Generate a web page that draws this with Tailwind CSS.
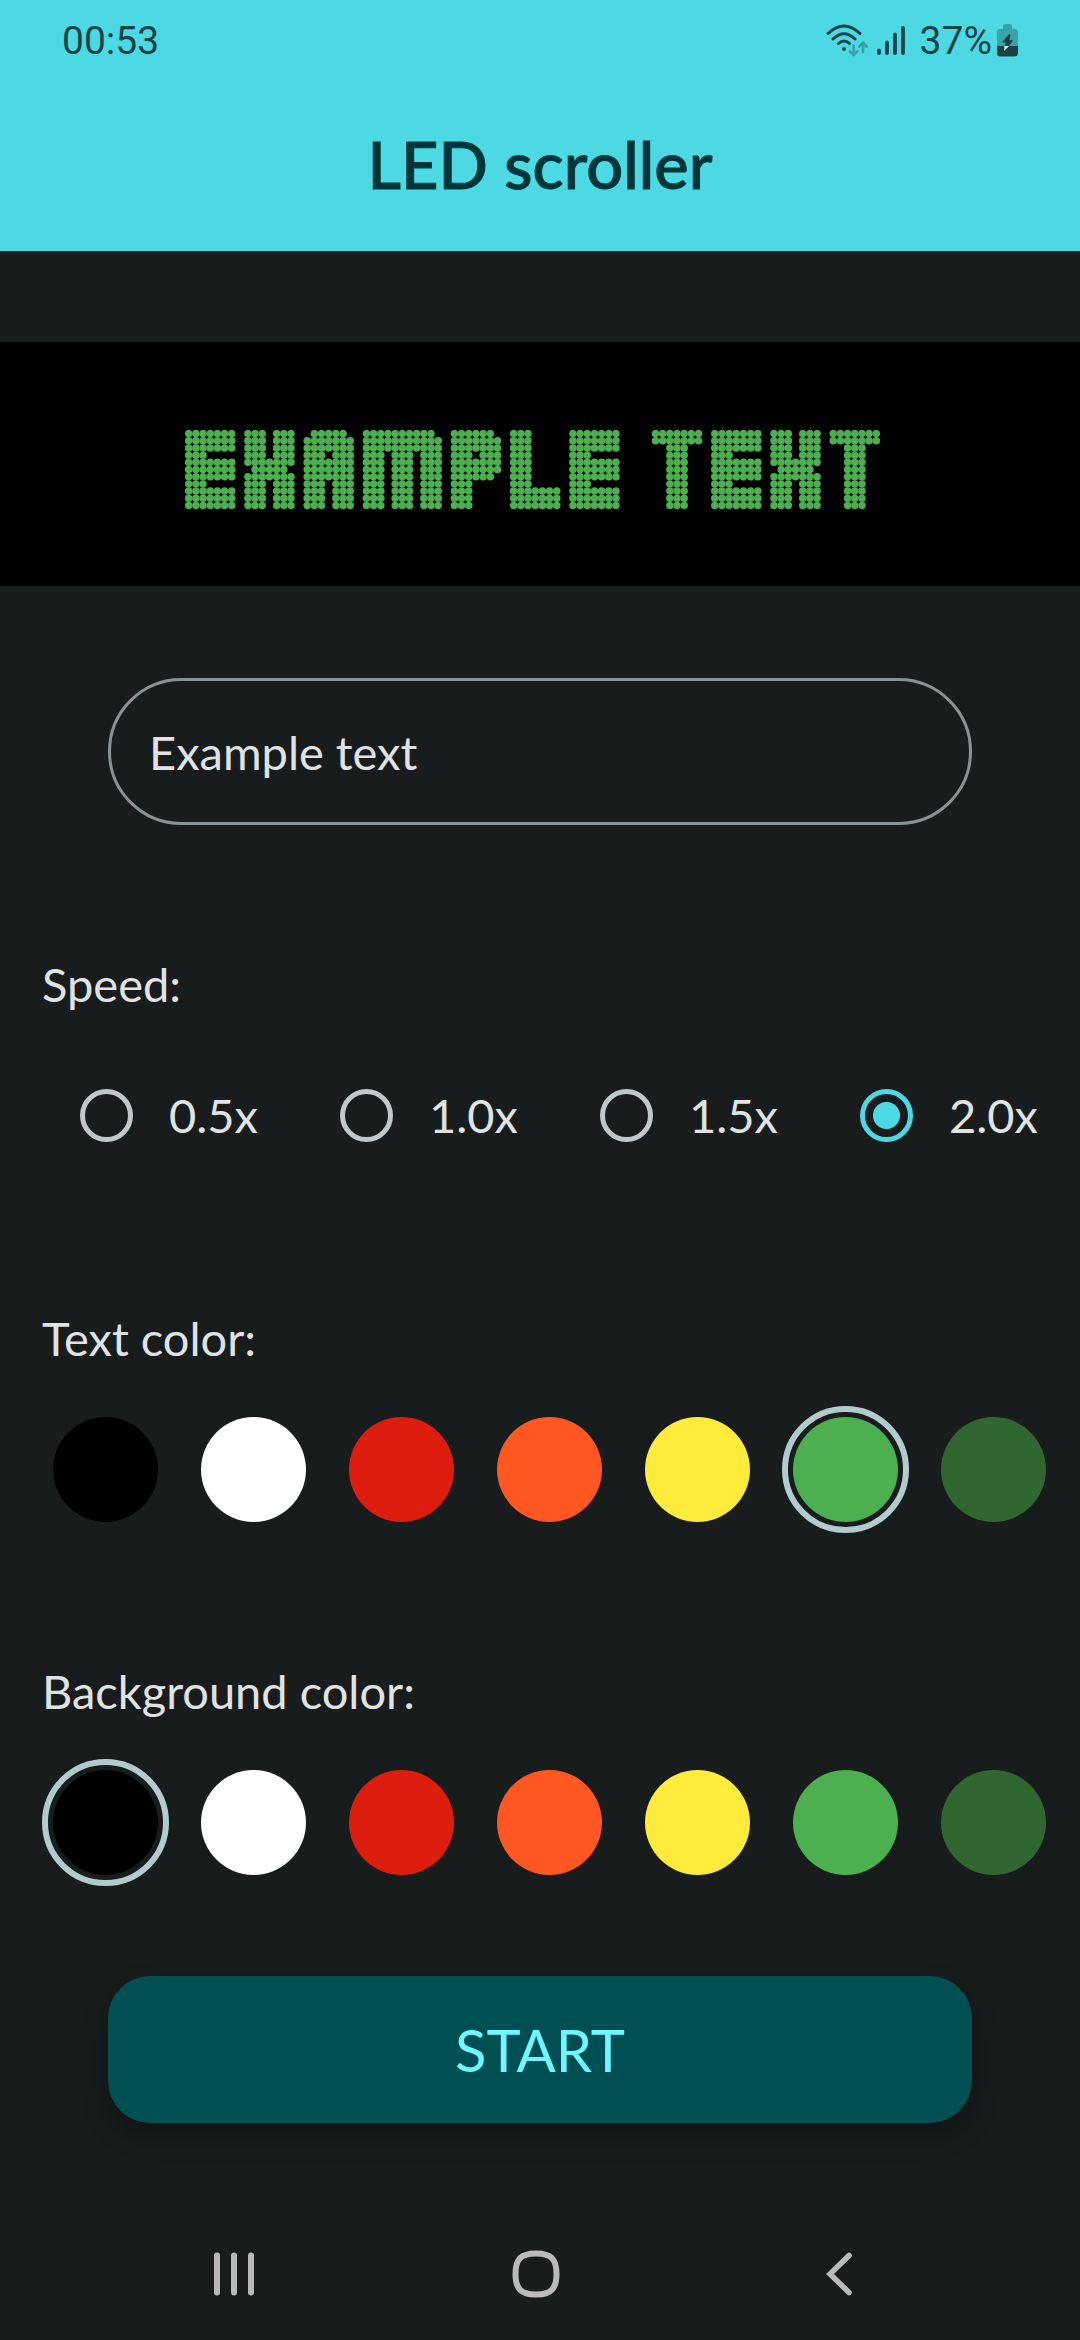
<!DOCTYPE html>
<html lang="en">
<head>
<meta charset="utf-8">
<meta name="viewport" content="width=device-width, initial-scale=1">
<title>LED scroller</title>
<script src="https://cdn.jsdelivr.net/npm/@tailwindcss/browser@4"></script>
</head>
<body class="flex min-h-screen flex-col overflow-x-hidden bg-[#191c1d] font-['Lato',sans-serif] text-[47px] leading-[60px] text-[#e0e3e3]">

<header class="bg-[#4dd9e3] pb-[47px]">
  <div class="flex h-[82px] items-center justify-between px-[62px] font-['Roboto',sans-serif] text-[39px] leading-none text-[#1a4347]">
    <time>00:53</time>
    <div class="flex items-center">
      <svg class="h-[36px] w-[42px]" viewBox="824 24 42 36" fill="none" stroke="currentColor" stroke-width="3" stroke-linecap="round" aria-label="Wi-Fi" role="img">
        <path d="M826 34.500Q842 19.500 858 34.500M831 40Q842 29.500 853 40M836.500 44.500Q842 39.500 847.500 44.500"/>
        <circle cx="842" cy="50" r="2" fill="currentColor" stroke="none"/>
        <g class="text-[#389ea6]"><path d="M851.500 46.500V55.500M847.800 52.300L851.500 56L855.200 52.300M861 53V44.500M857.300 47.500L861 43.800L864.700 47.500" stroke="currentColor" stroke-width="2.600"/></g>
      </svg>
      <svg class="ml-[8px] h-[36px] w-[30px]" viewBox="874 24 30 36" stroke="currentColor" stroke-width="3.800" stroke-linecap="round" aria-label="Signal" role="img">
        <path d="M877 51.500V54M885 43.500V54M893 35.500V54M901 29V54"/>
      </svg>
      <span class="ml-[14px]">37%</span>
      <svg class="ml-[4px] h-[36px] w-[22px]" viewBox="995 24 22 36" aria-label="Charging" role="img">
        <path d="M1002 27Q1002 25 1004 25H1009Q1011 25 1011 27V30H1014Q1017 30 1017 33V47H996V33Q996 30 999 30H1002Z" fill="#3aa3aa"/>
        <path d="M996 47H1017V54Q1017 57.500 1013.500 57.500H999.500Q996 57.500 996 54Z" fill="#1a4347"/>
        <path d="M1008 35L1001 43.500H1005L1003.500 47H1008L1012 41H1008.500L1009.500 36Z" fill="#1a4347"/>
        <path d="M1003.500 47H1008L1003 52Z" fill="#dffcff"/>
      </svg>
    </div>
  </div>
  <h1 class="mt-[42px] text-center text-[65px] leading-[80px] font-medium text-[#00363a] [-webkit-text-stroke:1px_#00363a]">LED scroller</h1>
</header>

<main class="flex flex-col">
  <div class="mt-[91px] flex h-[244px] items-center justify-center bg-black pt-[10px] pr-[16px]">
    <svg id="display" class="h-[79px] w-[697px] fill-[#4caf50]" role="img"></svg>
  </div>

  <input id="message" type="text" value="Example text" aria-label="Text to scroll" class="mx-auto mt-[92px] h-[147px] w-4/5 rounded-full border-3 border-[#899294] bg-transparent px-[38px] outline-none">

  <fieldset class="mt-[129px] px-[42px]">
    <legend>Speed:</legend>
    <div class="mt-[71px] ml-[38px] flex justify-between">
      <label class="flex items-center gap-[36px]"><input type="radio" name="speed" class="size-[53px] appearance-none rounded-full border-5 border-[#bfc8ca] checked:border-[#4dd9e3] checked:bg-[radial-gradient(circle,#4dd9e3_13px,transparent_14px)]">0.5x</label>
      <label class="flex items-center gap-[36px]"><input type="radio" name="speed" class="size-[53px] appearance-none rounded-full border-5 border-[#bfc8ca] checked:border-[#4dd9e3] checked:bg-[radial-gradient(circle,#4dd9e3_13px,transparent_14px)]">1.0x</label>
      <label class="flex items-center gap-[36px]"><input type="radio" name="speed" class="size-[53px] appearance-none rounded-full border-5 border-[#bfc8ca] checked:border-[#4dd9e3] checked:bg-[radial-gradient(circle,#4dd9e3_13px,transparent_14px)]">1.5x</label>
      <label class="flex items-center gap-[36px]"><input type="radio" name="speed" checked class="size-[53px] appearance-none rounded-full border-5 border-[#bfc8ca] checked:border-[#4dd9e3] checked:bg-[radial-gradient(circle,#4dd9e3_13px,transparent_14px)]">2.0x</label>
    </div>
  </fieldset>

  <fieldset class="mt-[163px] px-[42px]">
    <legend>Text color:</legend>
    <div class="mt-[49px] ml-[11px] flex gap-[43px]">
      <input type="radio" name="text-color" aria-label="Black" class="size-[105px] shrink-0 appearance-none rounded-full bg-black outline-offset-5 outline-[#b1cbce] checked:outline-6">
      <input type="radio" name="text-color" aria-label="White" class="size-[105px] shrink-0 appearance-none rounded-full bg-white outline-offset-5 outline-[#b1cbce] checked:outline-6">
      <input type="radio" name="text-color" aria-label="Red" class="size-[105px] shrink-0 appearance-none rounded-full bg-[#dd1e0f] outline-offset-5 outline-[#b1cbce] checked:outline-6">
      <input type="radio" name="text-color" aria-label="Orange" class="size-[105px] shrink-0 appearance-none rounded-full bg-[#ff5722] outline-offset-5 outline-[#b1cbce] checked:outline-6">
      <input type="radio" name="text-color" aria-label="Yellow" class="size-[105px] shrink-0 appearance-none rounded-full bg-[#ffeb3b] outline-offset-5 outline-[#b1cbce] checked:outline-6">
      <input type="radio" name="text-color" aria-label="Green" checked class="size-[105px] shrink-0 appearance-none rounded-full bg-[#4caf50] outline-offset-5 outline-[#b1cbce] checked:outline-6">
      <input type="radio" name="text-color" aria-label="Dark green" class="size-[105px] shrink-0 appearance-none rounded-full bg-[#306731] outline-offset-5 outline-[#b1cbce] checked:outline-6">
    </div>
  </fieldset>

  <fieldset class="mt-[139px] px-[42px]">
    <legend>Background color:</legend>
    <div class="mt-[49px] ml-[11px] flex gap-[43px]">
      <input type="radio" name="background-color" aria-label="Black" checked class="size-[105px] shrink-0 appearance-none rounded-full bg-black outline-offset-5 outline-[#b1cbce] checked:outline-6">
      <input type="radio" name="background-color" aria-label="White" class="size-[105px] shrink-0 appearance-none rounded-full bg-white outline-offset-5 outline-[#b1cbce] checked:outline-6">
      <input type="radio" name="background-color" aria-label="Red" class="size-[105px] shrink-0 appearance-none rounded-full bg-[#dd1e0f] outline-offset-5 outline-[#b1cbce] checked:outline-6">
      <input type="radio" name="background-color" aria-label="Orange" class="size-[105px] shrink-0 appearance-none rounded-full bg-[#ff5722] outline-offset-5 outline-[#b1cbce] checked:outline-6">
      <input type="radio" name="background-color" aria-label="Yellow" class="size-[105px] shrink-0 appearance-none rounded-full bg-[#ffeb3b] outline-offset-5 outline-[#b1cbce] checked:outline-6">
      <input type="radio" name="background-color" aria-label="Green" class="size-[105px] shrink-0 appearance-none rounded-full bg-[#4caf50] outline-offset-5 outline-[#b1cbce] checked:outline-6">
      <input type="radio" name="background-color" aria-label="Dark green" class="size-[105px] shrink-0 appearance-none rounded-full bg-[#306731] outline-offset-5 outline-[#b1cbce] checked:outline-6">
    </div>
  </fieldset>

  <button type="button" class="mx-auto mt-[101px] h-[147px] w-4/5 rounded-[42px] bg-[#004f53] text-[58px] text-[#6ff6ff] shadow-[0_12px_24px_rgba(0,0,0,0.35)]">START</button>
</main>

<nav class="mt-auto flex h-[132px] items-center justify-around pr-[90px] pl-[83px] text-[#bababa]">
  <button type="button" aria-label="Recent apps" class="flex size-[64px] items-center justify-center"><svg class="h-[44px] w-[42px]" viewBox="0 0 42 44" stroke="currentColor" stroke-width="6" stroke-linecap="round"><path d="M4 3.500V40.500M21 3.500V40.500M38 3.500V40.500"/></svg></button>
  <button type="button" aria-label="Home" class="flex size-[64px] items-center justify-center"><svg class="size-[48px]" viewBox="0 0 48 48" fill="none" stroke="currentColor" stroke-width="6"><path d="M24 3.500C39 3.500 44.500 9 44.500 24S39 44.500 24 44.500S3.500 39 3.500 24S9 3.500 24 3.500Z"/></svg></button>
  <button type="button" aria-label="Back" class="flex size-[64px] items-center justify-center"><svg class="h-[44px] w-[28px]" viewBox="0 0 28 44" fill="none" stroke="currentColor" stroke-width="5.500" stroke-linecap="round"><path d="M24 3.500L5 22L24 40.500"/></svg></button>
</nav>

<script>
// Lamp patterns of the dot-matrix alphabet, eleven rows per character.
const full = '1111111', legs = '1110111', stem = '1110000';
const rows = (...parts) => parts.flatMap(([row, count]) => Array(count).fill(row));
const alphabet = {
  E: rows([full, 3], [stem, 1], [full, 3], [stem, 1], [full, 3]),
  X: rows([legs, 4], [full, 1], ['0111110', 1], [full, 1], [legs, 4]),
  A: rows(['0111110', 1], [full, 2], [legs, 1], [full, 3], [legs, 4]),
  M: rows(['11111111110', 1], ['11111111111', 2], ['11101110111', 8]),
  P: rows(['1111110', 1], [full, 2], [legs, 1], [full, 2], ['1111110', 1], [stem, 4]),
  L: rows([stem, 8], [full, 3]),
  T: rows([full, 2], ['0011100', 9]),
  ' ': rows(['00', 11])
};
const display = document.getElementById('display');
const message = document.getElementById('message').value.toUpperCase();
let x = 0, lamps = '';
for (const character of message) {
  const pattern = alphabet[character];
  pattern.forEach((row, y) => [...row].forEach((on, i) => {
    if (on === '1') lamps += `<circle cx="${x + i + 0.5}" cy="${y + 0.5}" r="0.52"/>`;
  }));
  x += pattern[0].length + 1.25;
}
display.setAttribute('viewBox', `0 0 ${x - 1.25} 11`);
display.setAttribute('aria-label', message);
display.innerHTML = lamps;
</script>
</body>
</html>
